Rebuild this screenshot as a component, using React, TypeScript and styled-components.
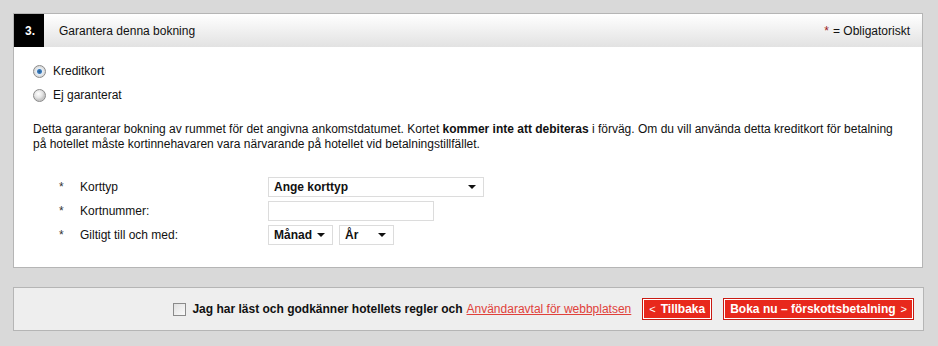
import React from "react";
import styled, { createGlobalStyle } from "styled-components";

const GlobalStyle = createGlobalStyle`
  html, body {
    margin: 0;
    padding: 0;
    background: #d9d9d9;
  }
  body {
    font-family: "Liberation Sans", Arial, sans-serif;
    font-size: 12px;
    color: #111;
  }
`;

const Page = styled.div`
  padding: 13px 14px 0 13px;
  width: 912px;
`;

const Panel = styled.div`
  width: 908px;
  border: 1px solid #b5b5b5;
  background: #fff;
`;

const Header = styled.div`
  display: flex;
  align-items: stretch;
  height: 33px;
  background: linear-gradient(#ffffff, #e2e2e2);
`;

const Step = styled.div`
  width: 30px;
  background: #000;
  color: #fff;
  font-weight: bold;
  display: flex;
  align-items: center;
  padding-left: 11px;
  box-sizing: border-box;
`;

const Title = styled.div`
  flex: 1;
  display: flex;
  align-items: center;
  padding-left: 15px;
`;

const Required = styled.div`
  display: flex;
  align-items: center;
  padding-right: 12px;
  gap: 4px;
`;

const Star = styled.span`
  color: #9b1b1b;
`;

const Body = styled.div`
  padding: 16px 19px 22px 19px;
`;

const RadioGroup = styled.div`
  display: flex;
  flex-direction: column;
  gap: 8px;
`;

const RadioLabel = styled.label`
  display: flex;
  align-items: center;
  gap: 7px;
  height: 16px;
`;

const RadioDot = styled.span<{ $checked?: boolean }>`
  width: 11px;
  height: 11px;
  border-radius: 50%;
  border: 1px solid #8a8a8a;
  background: ${(p) =>
    p.$checked
      ? "radial-gradient(circle, #2a5d8a 0, #3a7cbf 2px, #e6eef5 3px, #dcdcdc 5px)"
      : "radial-gradient(circle at 40% 35%, #fff 0, #e4e4e4 4px, #c8c8c8 6px)"};
`;

const Text = styled.p`
  margin: 19px 0 0 0;
  line-height: 15px;
`;

const Form = styled.div`
  margin-top: 25px;
  display: grid;
  grid-template-columns: 21px 188px auto;
  row-gap: 4px;
  padding-left: 26px;
  align-items: center;
`;

const Asterisk = styled.span`
  color: #333;
`;

const FieldRow = styled.div`
  display: flex;
  gap: 6px;
`;

const Select = styled.div<{ $w: number }>`
  width: ${(p) => p.$w}px;
  height: 20px;
  box-sizing: border-box;
  border: 1px solid #dcdcdc;
  background: #fff;
  display: flex;
  align-items: center;
  justify-content: space-between;
  padding: 0 7px 0 5px;
  font-weight: bold;
`;

const Caret = styled.span`
  width: 0;
  height: 0;
  border-left: 4px solid transparent;
  border-right: 4px solid transparent;
  border-top: 4px solid #111;
`;

const Input = styled.div`
  width: 166px;
  height: 20px;
  box-sizing: border-box;
  border: 1px solid #dcdcdc;
  background: #fff;
`;

const Footer = styled.div`
  margin-top: 19px;
  width: 911px;
  height: 44px;
  box-sizing: border-box;
  border: 1px solid #b5b5b5;
  background: #eeeeee;
  display: flex;
  align-items: center;
  justify-content: flex-end;
  padding-right: 9px;
`;

const Check = styled.span`
  width: 11px;
  height: 11px;
  border: 1px solid #8a8a8a;
  background: linear-gradient(135deg, #e0e0e0, #fafafa);
  margin-right: 6px;
`;

const Agree = styled.span`
  font-weight: bold;
  margin-right: 4px;
`;

const Link = styled.a`
  color: #e0413a;
  text-decoration: underline;
  margin-right: 11px;
`;

const RedButton = styled.button<{ $ml?: number }>`
  font-family: "Liberation Sans", Arial, sans-serif;
  font-size: 12px;
  font-weight: bold;
  color: #fff;
  background: #e8281c;
  border: 1px solid #c91a12;
  box-shadow: inset 0 0 0 1px #fff;
  height: 22px;
  padding: 0 6px;
  margin-left: ${(p) => p.$ml ?? 0}px;
  display: flex;
  align-items: center;
  gap: 5px;
  cursor: pointer;
`;

const Chevron = styled.span`
  font-weight: normal;
  font-size: 11px;
`;

export default function App() {
  return (
    <>
      <GlobalStyle />
      <Page>
        <Panel>
          <Header>
            <Step>3.</Step>
            <Title>Garantera denna bokning</Title>
            <Required>
              <Star>*</Star> = Obligatoriskt
            </Required>
          </Header>
          <Body>
            <RadioGroup>
              <RadioLabel>
                <RadioDot $checked />
                Kreditkort
              </RadioLabel>
              <RadioLabel>
                <RadioDot />
                Ej garanterat
              </RadioLabel>
            </RadioGroup>
            <Text>
              Detta garanterar bokning av rummet för det angivna ankomstdatumet. Kortet{" "}
              <b>kommer inte att debiteras</b> i förväg. Om du vill använda detta kreditkort för
              betalning på hotellet måste kortinnehavaren vara närvarande på hotellet vid
              betalningstillfället.
            </Text>
            <Form>
              <Asterisk>*</Asterisk>
              <span>Korttyp</span>
              <Select $w={216}>
                Ange korttyp <Caret />
              </Select>
              <Asterisk>*</Asterisk>
              <span>Kortnummer:</span>
              <Input />
              <Asterisk>*</Asterisk>
              <span>Giltigt till och med:</span>
              <FieldRow>
                <Select $w={65}>
                  Månad <Caret />
                </Select>
                <Select $w={55}>
                  År <Caret />
                </Select>
              </FieldRow>
            </Form>
          </Body>
        </Panel>
        <Footer>
          <Check />
          <Agree>Jag har läst och godkänner hotellets regler och</Agree>
          <Link href="#">Användaravtal för webbplatsen</Link>
          <RedButton>
            <Chevron>&lt;</Chevron>Tillbaka
          </RedButton>
          <RedButton $ml={11}>
            Boka nu – förskottsbetalning<Chevron>&gt;</Chevron>
          </RedButton>
        </Footer>
      </Page>
    </>
  );
}
